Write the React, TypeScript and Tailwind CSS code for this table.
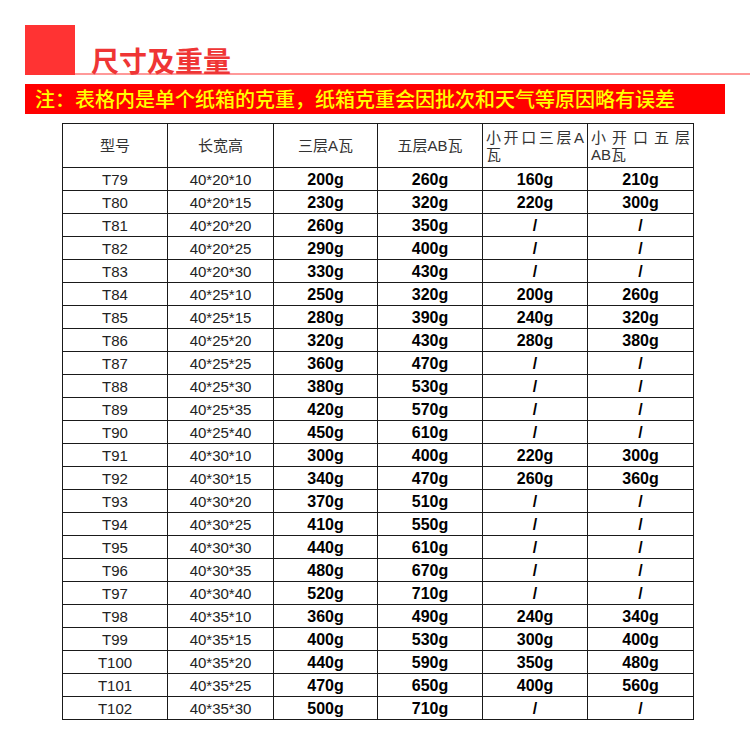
import React from "react";

const rows: string[][] = [
  ["T79", "40*20*10", "200g", "260g", "160g", "210g"],
  ["T80", "40*20*15", "230g", "320g", "220g", "300g"],
  ["T81", "40*20*20", "260g", "350g", "/", "/"],
  ["T82", "40*20*25", "290g", "400g", "/", "/"],
  ["T83", "40*20*30", "330g", "430g", "/", "/"],
  ["T84", "40*25*10", "250g", "320g", "200g", "260g"],
  ["T85", "40*25*15", "280g", "390g", "240g", "320g"],
  ["T86", "40*25*20", "320g", "430g", "280g", "380g"],
  ["T87", "40*25*25", "360g", "470g", "/", "/"],
  ["T88", "40*25*30", "380g", "530g", "/", "/"],
  ["T89", "40*25*35", "420g", "570g", "/", "/"],
  ["T90", "40*25*40", "450g", "610g", "/", "/"],
  ["T91", "40*30*10", "300g", "400g", "220g", "300g"],
  ["T92", "40*30*15", "340g", "470g", "260g", "360g"],
  ["T93", "40*30*20", "370g", "510g", "/", "/"],
  ["T94", "40*30*25", "410g", "550g", "/", "/"],
  ["T95", "40*30*30", "440g", "610g", "/", "/"],
  ["T96", "40*30*35", "480g", "670g", "/", "/"],
  ["T97", "40*30*40", "520g", "710g", "/", "/"],
  ["T98", "40*35*10", "360g", "490g", "240g", "340g"],
  ["T99", "40*35*15", "400g", "530g", "300g", "400g"],
  ["T100", "40*35*20", "440g", "590g", "350g", "480g"],
  ["T101", "40*35*25", "470g", "650g", "400g", "560g"],
  ["T102", "40*35*30", "500g", "710g", "/", "/"],
];

const thBase =
  "border border-[#1a1a1a] font-normal text-[15px] leading-[17px] text-[#333] p-0";

export default function App() {
  return (
    <div
      className="w-[750px] h-[750px] bg-white pl-[25px] pt-[25px]"
      style={{ fontFamily: '"Liberation Sans", "Noto Sans CJK SC", sans-serif' }}
    >
      <div className="flex h-[50px]">
        <div className="w-[50px] h-[50px] bg-[#ff3333]" />
        <div className="flex-1 flex items-end border-b-2 border-[#ff9999] pl-[16px]">
          <span
            className="text-[28px] leading-[28px] font-bold text-[#ef3535] -mb-[1px]"
            style={{ fontFamily: '"Noto Sans CJK SC", sans-serif' }}
          >
            尺寸及重量
          </span>
        </div>
      </div>
      <div
        className="mt-[9px] w-[700px] h-[30px] bg-[#ff0000] flex items-center pl-[10px] text-[20px] leading-[30px] text-[#ffff00] font-medium"
        style={{ fontFamily: '"Noto Sans CJK SC", sans-serif' }}
      >
        注：表格内是单个纸箱的克重，纸箱克重会因批次和天气等原因略有误差
      </div>
      <table className="mt-[9px] ml-[37px] table-fixed border-collapse w-[631px]">
        <colgroup>
          <col className="w-[105px]" />
          <col className="w-[106px]" />
          <col className="w-[104px]" />
          <col className="w-[105px]" />
          <col className="w-[105px]" />
          <col className="w-[106px]" />
        </colgroup>
        <thead>
          <tr className="h-[44px]">
            {["型号", "长宽高", "三层A瓦", "五层AB瓦"].map((h) => (
              <th key={h} className={thBase + " text-center"}>
                {h}
              </th>
            ))}
            <th className={thBase + " text-left px-[3px] align-middle"}>
              <span className="block text-justify [text-align-last:justify]">小开口三层A</span>
              <span className="block">瓦</span>
            </th>
            <th className={thBase + " text-left px-[3px] align-middle"}>
              <span className="block text-justify [text-align-last:justify]">小开口五层</span>
              <span className="block">AB瓦</span>
            </th>
          </tr>
        </thead>
        <tbody>
          {rows.map((r) => (
            <tr key={r[0]} className="h-[23px]">
              {r.map((c, i) => (
                <td
                  key={i}
                  className={
                    i < 2
                      ? "border border-[#1a1a1a] text-center text-[15px] leading-[18px] text-[#222] p-0 pt-[1px]"
                      : "border border-[#1a1a1a] text-center text-[16px] leading-[18px] font-bold text-black p-0 pt-[1px]"
                  }
                >
                  {c}
                </td>
              ))}
            </tr>
          ))}
        </tbody>
      </table>
    </div>
  );
}
